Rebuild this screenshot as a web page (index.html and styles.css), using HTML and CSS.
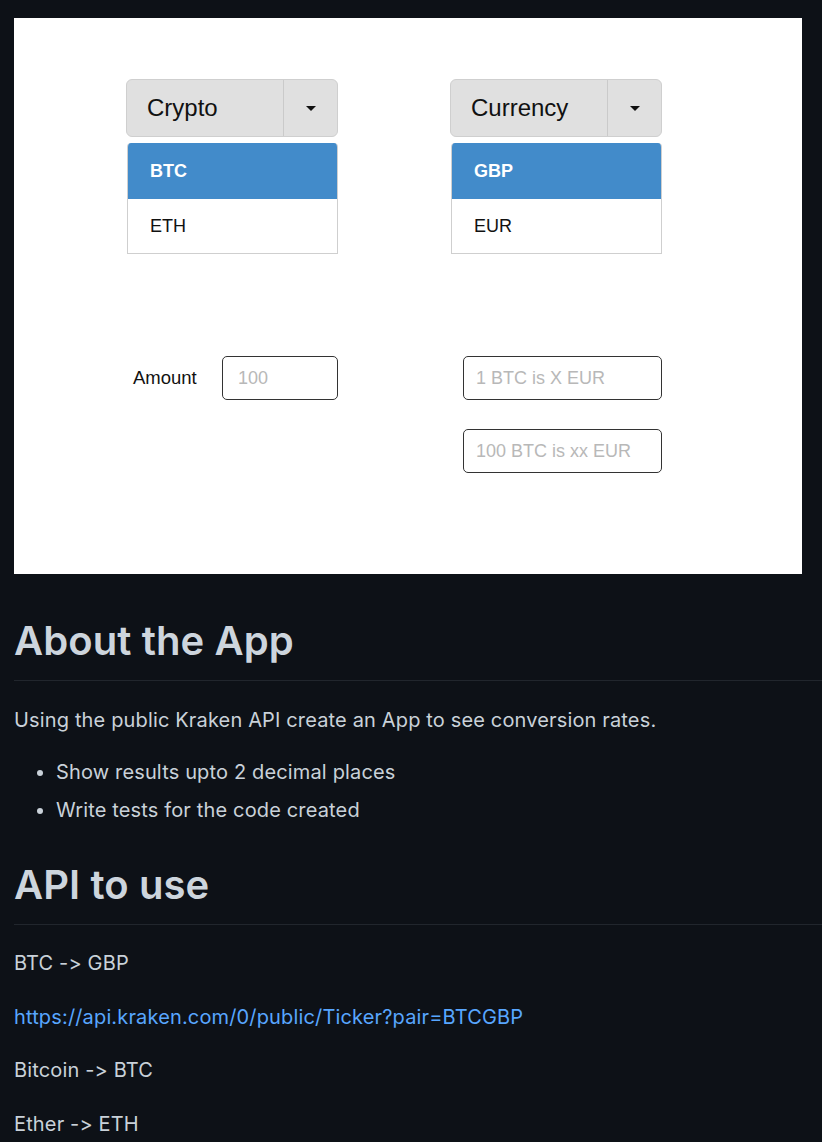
FILE: index.html
```html
<!DOCTYPE html>
<html>
<head>
<meta charset="utf-8">
<link rel="stylesheet" href="styles.css">
</head>
<body>
<div class="readme">
  <div class="shot">
    <div class="selects">
      <div class="picker">
        <div class="btn">
          <span class="btn-label">Crypto</span>
          <span class="btn-toggle"><span class="caret"></span></span>
        </div>
        <ul class="menu">
          <li class="item active">BTC</li>
          <li class="item">ETH</li>
        </ul>
      </div>
      <div class="picker">
        <div class="btn">
          <span class="btn-label">Currency</span>
          <span class="btn-toggle"><span class="caret"></span></span>
        </div>
        <ul class="menu">
          <li class="item active">GBP</li>
          <li class="item">EUR</li>
        </ul>
      </div>
    </div>
    <div class="fields">
      <div class="amount">
        <span class="amount-label">Amount</span>
        <input class="field field-amount" placeholder="100">
      </div>
      <div class="results">
        <input class="field field-result" placeholder="1 BTC is X EUR">
        <input class="field field-result" placeholder="100 BTC is xx EUR">
      </div>
    </div>
  </div>

  <h1 class="heading heading-first">About the App</h1>
  <p class="para para-intro">Using the public Kraken API create an App to see conversion rates.</p>
  <ul class="list">
    <li>Show results upto 2 decimal places</li>
    <li>Write tests for the code created</li>
  </ul>

  <h1 class="heading heading-second">API to use</h1>
  <p class="para">BTC -&gt; GBP</p>
  <p class="para"><a class="link" href="#">https://api.kraken.com/0/public/Ticker?pair=BTCGBP</a></p>
  <p class="para">Bitcoin -&gt; BTC</p>
  <p class="para">Ether -&gt; ETH</p>
</div>
</body>
</html>
```

FILE: styles.css
```css
html, body {
  margin: 0;
  padding: 0;
  background: #0d1117;
}

body {
  font-family: Inter, "Noto Sans", "Liberation Sans", sans-serif;
  font-feature-settings: "calt" 0, "liga" 0;
  font-variant-ligatures: none;
  color: #c9d1d9;
  font-size: 20px;
  line-height: 32px;
}

.readme {
  padding: 18px 0 0 14px;
}

/* ---------- screenshot box ---------- */
.shot {
  width: 788px;
  height: 556px;
  background: #ffffff;
  box-sizing: border-box;
  padding: 61px 0 0 112px;
  font-family: "Liberation Sans", Arial, sans-serif;
  color: #111;
}

.selects {
  display: flex;
  gap: 112px;
}

.picker {
  width: 212px;
}

.btn {
  display: flex;
  height: 58px;
  box-sizing: border-box;
  border: 1px solid #cfcfcf;
  border-radius: 6px;
  background: #e0e0e0;
}

.btn-label {
  width: 157px;
  box-sizing: border-box;
  padding-left: 20px;
  font-size: 24px;
  line-height: 56px;
  border-right: 1px solid #cacaca;
}

.btn-toggle {
  flex: 1;
  display: flex;
  align-items: center;
  justify-content: center;
}

.caret {
  width: 0;
  height: 0;
  border-left: 5px solid transparent;
  border-right: 5px solid transparent;
  border-top: 5px solid #111;
  margin-left: 1px;
}

.menu {
  list-style: none;
  margin: 6px 0 0 1px;
  padding: 0;
  width: 211px;
  border: 1px solid #cfcfcf;
  border-top: none;
  border-radius: 4px 4px 0 0;
  overflow: hidden;
  box-sizing: border-box;
}

.item {
  height: 54px;
  line-height: 54px;
  padding-left: 22px;
  font-size: 18px;
}

.item.active {
  height: 56px;
  line-height: 56px;
  background: #428bca;
  color: #fff;
  font-weight: bold;
  margin: 0 -1px;
  padding-left: 23px;
}

.fields {
  display: flex;
  margin-top: 102px;
  gap: 125px;
}

.amount {
  display: flex;
  align-items: center;
  width: 212px;
  height: 44px;
}

.amount-label {
  font-size: 18.5px;
  margin-left: 7px;
  width: 89px;
}

.field {
  height: 44px;
  box-sizing: border-box;
  border: 1px solid #333;
  border-radius: 5px;
  background: #fff;
  font-family: "Liberation Sans", Arial, sans-serif;
  font-size: 18px;
  padding: 0 0 0 12px;
  outline: none;
  margin: 0;
}

.field::placeholder {
  color: #b8b8b8;
}

.field-amount {
  width: 116px;
  padding-left: 15px;
}

.results {
  display: flex;
  flex-direction: column;
  gap: 29px;
}

.field-result {
  width: 199px;
}

/* ---------- markdown ---------- */
.heading {
  font-size: 40px;
  line-height: 50px;
  font-weight: 600;
  color: #cdd5dd;
  margin: 32px 0 23px;
  padding-bottom: 14px;
  border-bottom: 1px solid #21262d;
  letter-spacing: 0.1px;
}

.heading-first {
  margin-top: 42px;
}

.heading-second {
  margin-top: 34px;
  margin-bottom: 22px;
}

.para {
  margin: 0 0 21.5px;
  letter-spacing: 0.15px;
}

.para-intro {
  margin-bottom: 20px;
}

.list {
  margin: 0;
  padding-left: 42px;
  letter-spacing: 0.15px;
}

.list li + li {
  margin-top: 6px;
}

.link {
  color: #58a6ff;
  text-decoration: none;
}
```
